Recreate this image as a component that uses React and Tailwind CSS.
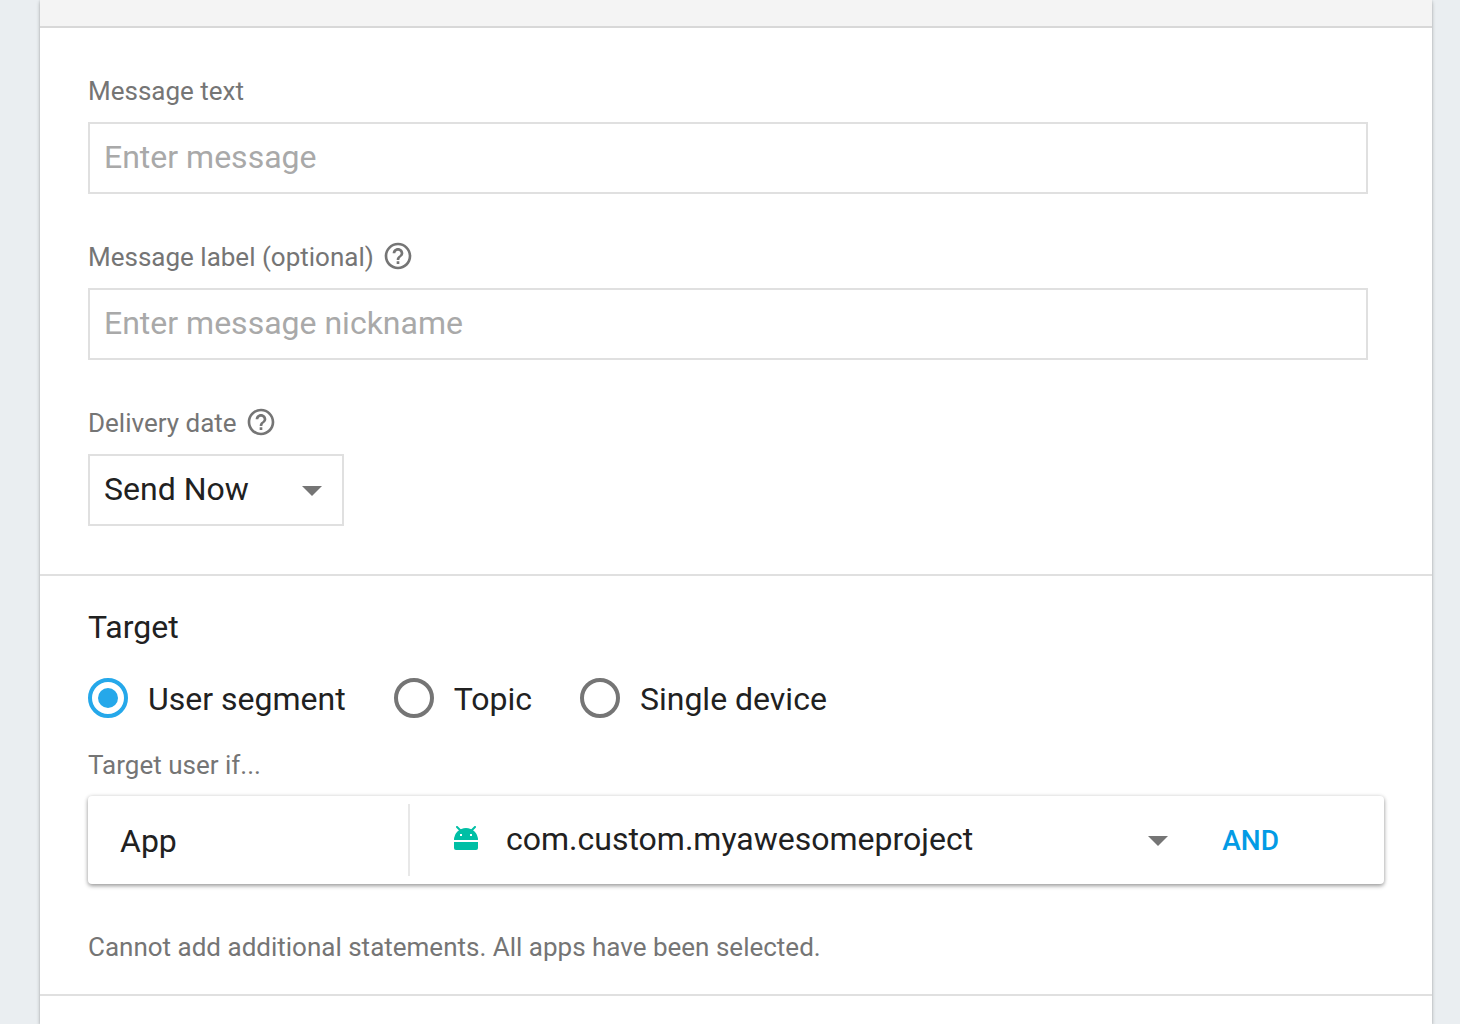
import React, { useState } from "react";

const TARGETS = ["User segment", "Topic", "Single device"];

function HelpIcon() {
  return (
    <svg viewBox="0 0 24 24" className="size-8" fill="#757575" aria-hidden="true">
      <path d="M11 18h2v-2h-2v2zm1-16C6.48 2 2 6.48 2 12s4.48 10 10 10 10-4.48 10-10S17.52 2 12 2zm0 18c-4.41 0-8-3.59-8-8s3.59-8 8-8 8 3.59 8 8-3.59 8-8 8zm0-14c-2.21 0-4 1.79-4 4h2c0-1.1.9-2 2-2s2 .9 2 2c0 2-3 1.75-3 5h2c0-2.25 3-2.5 3-5 0-2.21-1.79-4-4-4z" />
    </svg>
  );
}

function AndroidIcon() {
  return (
    <svg viewBox="0 0 24 24" className="size-6 shrink-0" aria-hidden="true">
      <path d="M0 14A12 12 0 0 1 24 14Z" fill="#00bfa5" />
      <path d="M3 1l4 4M21 1l-4 4" stroke="#00bfa5" strokeWidth="2" strokeLinecap="round" />
      <path d="M0 16h24v6a2 2 0 0 1-2 2H2a2 2 0 0 1-2-2Z" fill="#00bfa5" />
      <path d="M6 8h2v2H6zM16 8h2v2h-2z" fill="#fff" />
    </svg>
  );
}

function Caret({ className }) {
  return (
    <svg viewBox="0 0 20 10" className={`pointer-events-none absolute h-[10px] w-5 ${className}`} fill="#757575" aria-hidden="true">
      <path d="M0 0h20L10 10Z" />
    </svg>
  );
}

function Field({ id, label, help, children }) {
  return (
    <div className="flex flex-col gap-4">
      <div className="flex h-[30px] items-center gap-2">
        <label htmlFor={id} className="text-[26px] leading-[30px] text-[#757575]">{label}</label>
        {help && (
          <button type="button" aria-label={`Help: ${label}`} className="pb-[2px]">
            <HelpIcon />
          </button>
        )}
      </div>
      {children}
    </div>
  );
}

const inputClass =
  "h-[72px] w-full border-2 border-[#e0e0e0] bg-white px-[14px] pb-[2px] text-[32px] text-[#212121] placeholder:text-[#a9a9a9] outline-none";

export default function App() {
  const [target, setTarget] = useState(TARGETS[0]);

  return (
    <div className="flex min-h-screen bg-[#eaeef1] pr-7 pl-10 font-[Roboto,sans-serif] text-[#212121]">
      <main className="flex flex-1 flex-col bg-white shadow-[0_2px_4px_rgba(0,0,0,0.24),0_0_2px_rgba(0,0,0,0.12)]">
        <header className="h-7 border-b-2 border-[#d8d8d8] bg-[#f4f4f4]" />

        <section className="flex flex-col gap-12 border-b-2 border-[#e0e0e0] py-12 pr-16 pl-12">
          <Field id="message" label="Message text">
            <input id="message" type="text" placeholder="Enter message" className={inputClass} />
          </Field>
          <Field id="nickname" label="Message label (optional)" help>
            <input id="nickname" type="text" placeholder="Enter message nickname" className={inputClass} />
          </Field>
          <Field id="delivery" label="Delivery date" help>
            <div className="relative w-64">
              <select id="delivery" className="h-[72px] w-full appearance-none border-2 border-[#e0e0e0] bg-white px-[14px] pb-[2px] text-[32px] outline-none">
                <option>Send Now</option>
              </select>
              <Caret className="top-8 right-[22px]" />
            </div>
          </Field>
        </section>

        <section className="border-b-2 border-[#e0e0e0] px-12 pt-8 pb-8">
          <h2 className="text-[32px] leading-[38px]">Target</h2>
          <div role="radiogroup" aria-label="Target" className="mt-8 flex gap-12">
            {TARGETS.map((name) => (
              <label key={name} className="flex h-10 items-center gap-5 text-[32px] leading-[42px]">
                <input
                  type="radio"
                  name="target"
                  checked={target === name}
                  onChange={() => setTarget(name)}
                  className="grid size-10 appearance-none place-items-center rounded-full border-4 border-[#757575] before:size-5 before:rounded-full checked:border-[#25a8ea] checked:before:bg-[#25a8ea]"
                />
                <span className="pt-[2px]">{name}</span>
              </label>
            ))}
          </div>

          <p className="mt-8 text-[26px] leading-[30px] text-[#757575]">Target user if...</p>
          <div className="mt-4 flex h-[88px] items-center rounded-sm bg-white shadow-[0_2px_4px_rgba(0,0,0,0.36),0_0_4px_rgba(0,0,0,0.1)]">
            <div className="w-80 pt-[2px] pl-8 text-[32px]">App</div>
            <div className="flex h-[72px] flex-1 items-center border-l-2 border-[#e8e8e8] pl-11">
              <div className="pb-1">
                <AndroidIcon />
              </div>
              <div className="relative flex-1">
                <select aria-label="App" className="h-[72px] w-full appearance-none bg-transparent pb-[2px] pl-7 text-[32px] outline-none">
                  <option>com.custom.myawesomeproject</option>
                </select>
                <Caret className="top-8 right-0" />
              </div>
            </div>
            <button type="button" className="mr-[105px] ml-[54px] pt-[2px] text-[28px] font-medium text-[#039be5]">AND</button>
          </div>
          <p className="mt-12 text-[26px] leading-[30px] text-[#757575]">
            Cannot add additional statements. All apps have been selected.
          </p>
        </section>
      </main>
    </div>
  );
}
